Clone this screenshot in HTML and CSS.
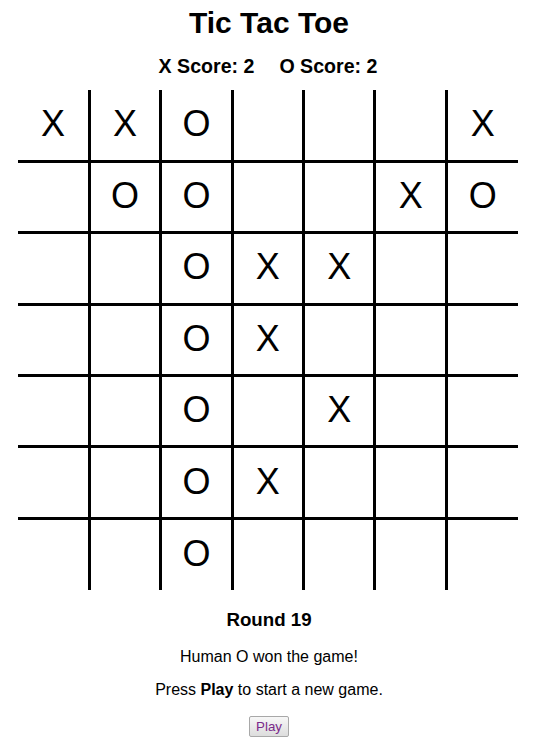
FILE: index.html
```html
<!DOCTYPE html>
<html lang="en">

<head>
    <meta charset="UTF-8">
    <meta name="viewport" content="width=device-width, initial-scale=1.0">
    <title>Tic Tac Toe</title>

    <link rel="stylesheet" href="styles.css">
</head>

<body>
    <h1 class="title">Tic Tac Toe</h1>
    <div class="score">
        <span>X Score: 2</span>
        <span>O Score: 2</span>
    </div>

    <div class="board">
        <!-- row 1 -->
        <div class="cell">X</div>
        <div class="cell">X</div>
        <div class="cell">O</div>
        <div class="cell"></div>
        <div class="cell"></div>
        <div class="cell"></div>
        <div class="cell">X</div>
        <!-- row 2 -->
        <div class="cell"></div>
        <div class="cell">O</div>
        <div class="cell">O</div>
        <div class="cell"></div>
        <div class="cell"></div>
        <div class="cell">X</div>
        <div class="cell">O</div>
        <!-- row 3 -->
        <div class="cell"></div>
        <div class="cell"></div>
        <div class="cell">O</div>
        <div class="cell">X</div>
        <div class="cell">X</div>
        <div class="cell"></div>
        <div class="cell"></div>
        <!-- row 4 -->
        <div class="cell"></div>
        <div class="cell"></div>
        <div class="cell">O</div>
        <div class="cell">X</div>
        <div class="cell"></div>
        <div class="cell"></div>
        <div class="cell"></div>
        <!-- row 5 -->
        <div class="cell"></div>
        <div class="cell"></div>
        <div class="cell">O</div>
        <div class="cell"></div>
        <div class="cell">X</div>
        <div class="cell"></div>
        <div class="cell"></div>
        <!-- row 6 -->
        <div class="cell"></div>
        <div class="cell"></div>
        <div class="cell">O</div>
        <div class="cell">X</div>
        <div class="cell"></div>
        <div class="cell"></div>
        <div class="cell"></div>
        <!-- row 7 -->
        <div class="cell"></div>
        <div class="cell"></div>
        <div class="cell">O</div>
        <div class="cell"></div>
        <div class="cell"></div>
        <div class="cell"></div>
        <div class="cell"></div>
    </div>

    <h3 class="round">Round 19</h3>
    <p class="msg">Human O won the game!</p>
    <p class="hint">Press <b>Play</b> to start a new game.</p>
    <button class="play">Play</button>
</body>

</html>
```

FILE: styles.css
```css
* {
    margin: 0;
    padding: 0;
}

body {
    font-family: "Liberation Sans", Arial, sans-serif;
    color: #000;
    background: #fff;
    text-align: center;
}

.title {
    margin-top: 6px;
    font-size: 30px;
    line-height: 34px;
    font-weight: bold;
}

.score {
    display: flex;
    justify-content: center;
    gap: 25px;
    margin-top: 15px;
    padding-right: 2px;
    font-size: 19.6px;
    line-height: 22px;
    font-weight: bold;
}

/* the black background shows through the gaps as grid lines */
.board {
    display: grid;
    grid-template-columns: 69.9px repeat(5, 68.4px) 69.9px;
    grid-template-rows: 69.9px repeat(5, 68.4px) 69.9px;
    gap: 3px;
    width: 500px;
    height: 500px;
    margin: 13px 20px 0 18px;
    background-color: #000;
}

.cell {
    display: flex;
    align-items: center;
    justify-content: center;
    padding-bottom: 2px;
    background-color: #fff;
    font-size: 36px;
}

.round {
    margin-top: 19px;
    font-size: 18.72px;
    line-height: 22px;
    font-weight: bold;
}

.msg {
    margin-top: 17px;
    font-size: 16px;
}

.hint {
    margin-top: 15px;
    font-size: 16px;
}

.play {
    margin-top: 17px;
    padding: 1px 6px;
    font-family: "Liberation Sans", Arial, sans-serif;
    font-size: 13.33px;
    color: #7a2a8a;
    background: linear-gradient(#f7f7f7, #dddddd);
    border: 1px solid #a8a8a8;
    border-radius: 2px;
    height: 21px;
}
```
